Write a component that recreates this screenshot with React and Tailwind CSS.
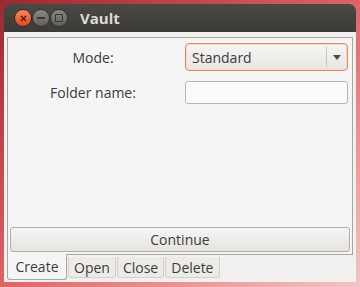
import React from "react";

const TABS = ["Create", "Open", "Close", "Delete"];

function WinButton({ kind }) {
  if (kind === "close") {
    return (
      <div className="flex h-[18px] w-[18px] items-center justify-center rounded-full border border-[#3a2a22] bg-gradient-to-b from-[#f7875a] to-[#dc4a1c]">
        <svg width="7" height="7" viewBox="0 0 7 7">
          <path d="M1 1L6 6M6 1L1 6" stroke="#4a1a0a" strokeWidth="1.3" />
        </svg>
      </div>
    );
  }
  return (
    <div className="flex h-[18px] w-[18px] items-center justify-center rounded-full border border-[#34332f] bg-gradient-to-b from-[#8a8984] to-[#605f5a]">
      {kind === "min" ? (
        <div className="h-[2px] w-[8px] bg-[#3a3935]" />
      ) : (
        <div className="h-[8px] w-[8px] border-[1.5px] border-[#3a3935]" />
      )}
    </div>
  );
}

export default function App() {
  return (
    <div
      className="h-[287px] w-[360px] overflow-hidden bg-gradient-to-br from-[#9a2830] via-[#dc6466] to-[#f4c4c4] pl-[4px] pt-[4px]"
      style={{ fontFamily: '"Open Sans", "Liberation Sans", sans-serif' }}
    >
      <div className="flex h-[278px] w-[352px] flex-col overflow-hidden rounded-t-[7px]">
        <div className="flex h-[28px] items-center bg-gradient-to-b from-[#4a4945] to-[#3c3b37] pl-[10px]">
          <div className="flex">
            <WinButton kind="close" />
            <WinButton kind="min" />
            <WinButton kind="max" />
          </div>
          <span className="ml-[12px] text-[15px] font-bold text-[#dfdbd2]">Vault</span>
        </div>

        <div className="flex flex-1 flex-col bg-[#f2f1f0] px-[3px] pt-[5px] text-[#3c3c3c]">
          <div className="flex h-[218px] flex-col border border-[#aaa6a0] bg-[#f5f5f5]">
            <div className="grid grid-cols-[170px_1fr] items-center gap-x-[7px] gap-y-[10px] pr-[4px] pt-[5px]">
              <div className="text-center text-[14px]">Mode:</div>
              <div className="flex h-[28px] items-center rounded-[4px] border border-[#e9865f] bg-gradient-to-b from-[#f6f5f4] to-[#e8e6e3] shadow-[inset_0_0_0_1px_#f8d9cc]">
                <span className="flex-1 pl-[6px] text-[14px]">Standard</span>
                <div className="h-[20px] w-px bg-[#c9c5bf]" />
                <div className="flex w-[20px] justify-center">
                  <svg width="8" height="5" viewBox="0 0 8 5">
                    <path d="M0 0H8L4 5Z" fill="#4c4c4c" />
                  </svg>
                </div>
              </div>
              <div className="text-center text-[14px]">Folder name:</div>
              <div className="h-[23px] rounded-[3px] border border-[#b8b4ae] bg-[#fbfbfb]" />
            </div>
            <div className="flex-1" />
            <button className="mx-[2px] mb-[2px] h-[25px] rounded-[3px] border border-[#b2aea8] bg-gradient-to-b from-[#f6f5f4] to-[#e6e4e1] text-[14px] text-[#3c3c3c]">
              Continue
            </button>
          </div>

          <div className="flex gap-[1px]">
            {TABS.map((t, i) =>
              i === 0 ? (
                <div
                  key={t}
                  className="-mt-px flex h-[26px] w-[60px] items-center justify-center rounded-b-[3px] border border-t-0 border-[#aaa6a0] bg-[#f5f5f5] text-[14px]"
                >
                  {t}
                </div>
              ) : (
                <div
                  key={t}
                  className="mt-[2px] flex h-[21px] items-center justify-center rounded-b-[3px] border border-t-0 border-[#d3cfca] bg-[#edebe8] px-[5px] text-[14px]"
                >
                  {t}
                </div>
              )
            )}
          </div>
        </div>
      </div>
    </div>
  );
}
